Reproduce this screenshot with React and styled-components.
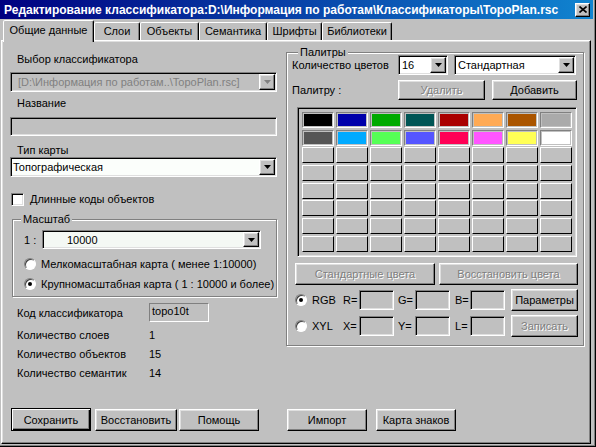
import React from 'react';
import styled, { createGlobalStyle, css } from 'styled-components';

const GlobalStyle = createGlobalStyle`
  html, body {
    margin: 0;
    padding: 0;
    background: #c0c0c0;
  }
  body {
    font-family: "Liberation Sans", Arial, sans-serif;
    font-size: 11px;
    color: #000;
  }
  * {
    box-sizing: border-box;
  }
`;

const sunken = css`
  border: 1px solid;
  border-color: #808080 #fff #fff #808080;
  box-shadow: inset 1px 1px 0 #000, inset -1px -1px 0 #dfdfdf;
`;

const raised = css`
  border: 1px solid;
  border-color: #fff #000 #000 #fff;
  box-shadow: inset -1px -1px 0 #808080, inset 1px 1px 0 #dfdfdf;
`;

const Window = styled.div`
  width: 596px;
  height: 447px;
  background: #c0c0c0;
  display: flex;
  flex-direction: column;
  border-right: 1px solid #000;
  border-bottom: 1px solid #000;
  box-shadow: inset -1px -1px 0 #808080;
  padding: 0 2px 2px 0;
  overflow: hidden;
`;

const TitleBar = styled.div`
  height: 19px;
  flex: none;
  display: flex;
  align-items: center;
  padding: 0 3px 0 4px;
  background: linear-gradient(to right, #000080, #1084d0);
  color: #fff;
  font-weight: bold;
  font-size: 12px;
  white-space: nowrap;
`;

const TitleText = styled.span`
  flex: 1;
  overflow: hidden;
`;

const CloseButton = styled.div`
  width: 15px;
  height: 14px;
  background: #c0c0c0;
  ${raised};
  display: flex;
  align-items: center;
  justify-content: center;
`;

const TabStrip = styled.div`
  height: 21px;
  flex: none;
  display: flex;
  align-items: flex-end;
  padding-left: 3px;
  position: relative;
  z-index: 1;
`;

const Tab = styled.div`
  width: ${p => p.$w}px;
  height: ${p => (p.$active ? 22 : 18)}px;
  margin-bottom: ${p => (p.$active ? -2 : 0)}px;
  padding-bottom: ${p => (p.$active ? 3 : 1)}px;
  display: flex;
  align-items: center;
  justify-content: center;
  background: #c0c0c0;
  border: 1px solid;
  border-bottom: none;
  border-color: #fff #000 transparent #fff;
  box-shadow: inset -1px 0 0 #808080;
  border-radius: 2px 2px 0 0;
  white-space: nowrap;
  position: relative;
  z-index: ${p => (p.$active ? 2 : 0)};
`;

const Panel = styled.div`
  flex: 1;
  margin: 0 2px 0 1px;
  border: 1px solid;
  border-color: #fff #000 #000 #fff;
  box-shadow: inset -1px -1px 0 #808080, inset 1px 1px 0 #dfdfdf;
  display: grid;
  grid-template-columns: 267px 298px;
  grid-template-rows: 1fr auto;
  column-gap: 9px;
  padding: 0 0 12px 8px;
`;

const Column = styled.div`
  display: flex;
  flex-direction: column;
  padding-top: ${p => p.$pt}px;
`;

const Text = styled.div`
  height: ${p => p.$h || 14}px;
  line-height: ${p => p.$h || 14}px;
  margin-top: ${p => p.$mt || 0}px;
  padding-left: ${p => p.$indent || 0}px;
  width: ${p => (p.$w ? `${p.$w}px` : 'auto')};
  flex: none;
  white-space: nowrap;
`;

const ComboBox = styled.div`
  ${sunken};
  width: ${p => (p.$w ? `${p.$w}px` : 'auto')};
  height: ${p => p.$h || 20}px;
  margin-top: ${p => p.$mt || 0}px;
  flex: none;
  background: ${p => (p.$disabled ? '#c0c0c0' : p.$bg || '#fff')};
  color: ${p => (p.$disabled ? '#808080' : '#000')};
  padding: 1px;
  display: flex;
  align-items: stretch;
`;

const ComboValue = styled.div`
  flex: 1;
  display: flex;
  align-items: center;
  padding-left: ${p => p.$indent ?? 1}px;
  white-space: nowrap;
  overflow: hidden;
`;

const ArrowButton = styled.div`
  width: 16px;
  flex: none;
  background: #c0c0c0;
  ${raised};
  display: flex;
  align-items: center;
  justify-content: center;
`;

const TextField = styled.div`
  ${sunken};
  width: ${p => (p.$w ? `${p.$w}px` : 'auto')};
  height: ${p => p.$h || 20}px;
  margin-top: ${p => p.$mt || 0}px;
  background: #c0c0c0;
  flex: none;
`;

const StaticField = styled.div`
  width: ${p => p.$w}px;
  height: 19px;
  border: 1px solid;
  border-color: #808080 #fff #fff #808080;
  padding: 0 2px;
  line-height: 14px;
  flex: none;
`;

const Row = styled.div`
  display: flex;
  align-items: center;
  height: ${p => p.$h || 20}px;
  margin-top: ${p => p.$mt || 0}px;
  margin-left: ${p => p.$ml || 0}px;
  gap: ${p => p.$gap || 0}px;
  flex: none;
  white-space: nowrap;
`;

const CheckBox = styled.span`
  width: 13px;
  height: 13px;
  flex: none;
  background: #fff;
  ${sunken};
  margin-right: 6px;
`;

const RadioCircle = styled.span`
  width: 12px;
  height: 12px;
  flex: none;
  border-radius: 50%;
  background: #fff;
  border: 1px solid;
  border-color: #808080 #fff #fff #808080;
  box-shadow: inset 1px 1px 0 #404040;
  display: flex;
  align-items: center;
  justify-content: center;
  margin-right: ${p => p.$gap ?? 5}px;

  &::after {
    content: '';
    width: 4px;
    height: 4px;
    border-radius: 50%;
    background: ${p => (p.$checked ? '#000' : 'transparent')};
  }
`;

const Group = styled.fieldset`
  margin: ${p => p.$mt || 0}px 0 0 ${p => p.$ml || 0}px;
  padding: ${p => p.$pad};
  width: ${p => p.$w}px;
  min-width: 0;
  border: 1px solid #808080;
  box-shadow: inset 1px 1px 0 #fff, 1px 1px 0 #fff;
  display: flex;
  flex-direction: column;
`;

const Legend = styled.legend`
  padding: 0 2px;
  margin-left: ${p => p.$ml || 0}px;
  height: 6px;
  line-height: 6px;
  background: #c0c0c0;
`;

const Button = styled.button`
  font: inherit;
  color: #000;
  width: ${p => p.$w}px;
  height: ${p => p.$h || 22}px;
  background: #c0c0c0;
  padding: 0;
  flex: none;
  white-space: nowrap;
  ${p =>
    p.$default
      ? css`
          border: 1px solid #000;
          box-shadow: inset 1px 1px 0 #fff, inset -1px -1px 0 #000, inset -2px -2px 0 #808080;
        `
      : raised};

  &:disabled {
    color: #808080;
    text-shadow: 1px 1px 0 #fff;
  }
`;

const ButtonRow = styled.div`
  display: flex;
  align-items: flex-end;
  margin-left: ${p => p.$ml || 0}px;
  gap: ${p => p.$gap || 4}px;
`;

const PaletteBox = styled.div`
  ${sunken};
  width: 280px;
  height: 150px;
  margin: 7px 0 0 5px;
  padding: 4px;
  display: grid;
  grid-template-columns: repeat(8, 32px);
  grid-auto-rows: 16px;
  column-gap: 2px;
  row-gap: 1.7px;
  align-content: start;
`;

const Cell = styled.div`
  border: 1px solid;
  ${p =>
    p.$color
      ? css`
          border-color: #808080 #fff #fff #808080;
          padding: 1px;
        `
      : css`
          border-color: #fff #000 #000 #fff;
        `};
  background: #c0c0c0;
`;

const Swatch = styled.div`
  width: 100%;
  height: 100%;
  background: ${p => p.$color};
`;

const CoordLabel = styled.span`
  width: ${p => p.$w}px;
  padding-left: ${p => p.$pl || 0}px;
  flex: none;
  white-space: nowrap;
`;

function Arrow({ disabled }) {
  return (
    <svg width="7" height="4" viewBox="0 0 7 4">
      <path d="M0 0h7L3.5 4z" fill={disabled ? '#808080' : '#000'} />
    </svg>
  );
}

function Combo({ value, w, h, mt, bg, disabled, indent }) {
  return (
    <ComboBox $w={w} $h={h} $mt={mt} $bg={bg} $disabled={disabled}>
      <ComboValue $indent={indent}>{value}</ComboValue>
      <ArrowButton>
        <Arrow disabled={disabled} />
      </ArrowButton>
    </ComboBox>
  );
}

const tabs = [
  ['Общие данные', 91],
  ['Слои', 46],
  ['Объекты', 59],
  ['Семантика', 68],
  ['Шрифты', 55],
  ['Библиотеки', 70],
];

const colors = [
  '#000000', '#0000aa', '#00aa00', '#005555', '#aa0000', '#ffaa55', '#aa5500', '#aaaaaa',
  '#555555', '#00aaff', '#55ff55', '#5555ff', '#ff0055', '#ff55ff', '#ffff55', '#ffffff',
];

const counts = [
  ['Количество слоев', '1'],
  ['Количество объектов', '15'],
  ['Количество семантик', '14'],
];

function CoordRow({ label, checked, names, mt, button, buttonDisabled }) {
  return (
    <Row $h={22} $mt={mt} $ml={3}>
      <RadioCircle $checked={checked} />
      <CoordLabel $w={31}>{label}</CoordLabel>
      <CoordLabel $w={16}>{names[0]}=</CoordLabel>
      <TextField $w={35} />
      <CoordLabel $w={21} $pl={4}>{names[1]}=</CoordLabel>
      <TextField $w={35} />
      <CoordLabel $w={20} $pl={5}>{names[2]}=</CoordLabel>
      <TextField $w={35} />
      <Button $w={67} $h={22} style={{ marginLeft: 6 }} disabled={buttonDisabled}>
        {button}
      </Button>
    </Row>
  );
}

export default function App() {
  const cells = Array.from({ length: 64 }, (_, i) => colors[i] || null);

  return (
    <>
      <GlobalStyle />
      <Window>
        <TitleBar>
          <TitleText>
            Редактирование классификатора:D:\Информация по работам\Классификаторы\TopoPlan.rsc
          </TitleText>
          <CloseButton>
            <svg width="8" height="7" viewBox="0 0 8 7">
              <path d="M0.5 0.5L7.5 6.5M7.5 0.5L0.5 6.5" stroke="#000" strokeWidth="1.6" />
            </svg>
          </CloseButton>
        </TitleBar>

        <TabStrip>
          {tabs.map(([t, w], i) => (
            <Tab key={t} $w={w} $active={i === 0}>
              {t}
            </Tab>
          ))}
        </TabStrip>

        <Panel>
          <Column $pt={11}>
            <Text $indent={7}>Выбор классификатора</Text>
            <Combo
              value="[D:\Информация по работам..\TopoPlan.rsc]"
              mt={6}
              disabled
              indent={6}
            />
            <Text $indent={7} $mt={4}>Название</Text>
            <TextField $h={19} $mt={7} />
            <Text $indent={7} $mt={8} $h={13}>Тип карты</Text>
            <Combo value="Топографическая" bg="#fbfefb" />
            <Row $h={14} $mt={15} $ml={1}>
              <CheckBox />
              Длинные коды объектов
            </Row>

            <Group $mt={10} $ml={2} $w={265} $pad="8px 0 5px 11px">
              <Legend $ml={-3}>Масштаб</Legend>
              <Row $h={19}>
                <CoordLabel $w={18}>1 :</CoordLabel>
                <Combo value="10000" w={219} h={19} bg="#f4f8f4" indent={23} />
              </Row>
              <Row $h={14} $mt={8}>
                <RadioCircle $gap={5} />
                Мелкомасштабная карта ( менее 1:10000)
              </Row>
              <Row $h={14} $mt={6}>
                <RadioCircle $gap={5} $checked />
                Крупномасштабная карта ( 1 : 10000 и более)
              </Row>
            </Group>

            <Row $h={19} $mt={6}>
              <Text $indent={7} $w={139}>Код классификатора</Text>
              <StaticField $w={60}>topo10t</StaticField>
            </Row>
            {counts.map(([label, value], i) => (
              <Row key={label} $h={19} $mt={i === 0 ? 3 : 0}>
                <Text $indent={7} $w={139}>{label}</Text>
                {value}
              </Row>
            ))}
          </Column>

          <Column $pt={8}>
            <Group $w={298} $pad="0 6px 8px 5px">
              <Legend $ml={6}>Палитры</Legend>
              <Row $h={20} $gap={6}>
                <Text $w={100}>Количество цветов</Text>
                <Combo value="16" w={50} indent={2} />
                <Combo value="Стандартная" w={122} indent={2} />
              </Row>
              <Row $h={20} $mt={5} $gap={7}>
                <Text $w={99}>Палитру :</Text>
                <Button $w={87} $h={20} disabled>
                  Удалить
                </Button>
                <Button $w={85} $h={20}>
                  Добавить
                </Button>
              </Row>
              <PaletteBox>
                {cells.map((c, i) => (
                  <Cell key={i} $color={c}>
                    {c && <Swatch $color={c} />}
                  </Cell>
                ))}
              </PaletteBox>
              <Row $h={22} $mt={6} $ml={3} $gap={4}>
                <Button $w={140} $h={22} disabled>
                  Стандартные цвета
                </Button>
                <Button $w={139} $h={22} disabled>
                  Восстановить цвета
                </Button>
              </Row>
              <CoordRow label="RGB" checked names={['R', 'G', 'B']} mt={4} button="Параметры" />
              <CoordRow label="XYL" names={['X', 'Y', 'L']} mt={4} button="Записать" buttonDisabled />
            </Group>
          </Column>

          <ButtonRow $ml={1} $gap={4}>
            <Button $w={80} $h={23} $default>
              Сохранить
            </Button>
            <Button $w={82} $h={22}>
              Восстановить
            </Button>
            <Button $w={80} $h={22} style={{ marginLeft: -2 }}>
              Помощь
            </Button>
          </ButtonRow>
          <ButtonRow $ml={1} $gap={9}>
            <Button $w={80} $h={22}>
              Импорт
            </Button>
            <Button $w={80} $h={22}>
              Карта знаков
            </Button>
          </ButtonRow>
        </Panel>
      </Window>
    </>
  );
}
